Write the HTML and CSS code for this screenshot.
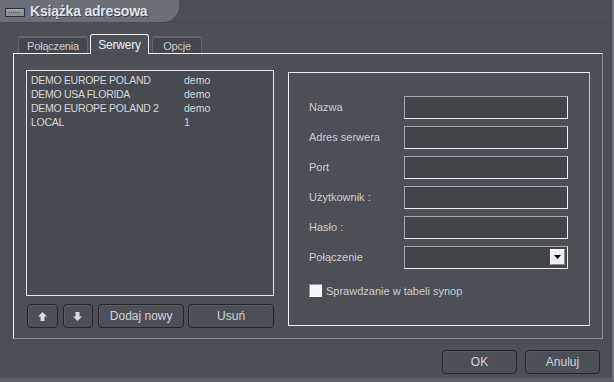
FILE: index.html
```html
<!DOCTYPE html>
<html lang="pl">
<head>
  <meta charset="UTF-8" />
  <title>Książka adresowa</title>
  <link rel="stylesheet" href="styles.css">
</head>
<body>
  <div class="window">
    <div class="titlebar">
      <div class="title-tab">
        <svg class="app-icon" width="20" height="9" viewBox="0 0 20 9">
          <rect x="0.5" y="0.5" width="19" height="8" fill="#8c9096" stroke="#2e3135"/>
          <rect x="1.5" y="1.5" width="17" height="1" fill="#b4b7bb"/>
          <line x1="4" y1="4.5" x2="16" y2="4.5" stroke="#55595f" stroke-dasharray="1 1"/>
        </svg>
        <span class="title">Książka adresowa</span>
      </div>
    </div>

    <div class="tabs">
      <div class="tab tab-conn">Połączenia</div>
      <div class="tab active">Serwery</div>
      <div class="tab tab-opts">Opcje</div>
    </div>

    <div class="panel">
      <div class="left-col">
        <div class="list">
          <div class="row"><span class="c1">DEMO EUROPE POLAND</span><span>demo</span></div>
          <div class="row"><span class="c1">DEMO USA FLORIDA</span><span>demo</span></div>
          <div class="row"><span class="c1">DEMO EUROPE POLAND 2</span><span>demo</span></div>
          <div class="row"><span class="c1">LOCAL</span><span>1</span></div>
        </div>
        <div class="list-buttons">
          <button class="btn btn-icon">
            <svg width="9" height="9" viewBox="0 0 9 9"><path d="M4.5 0 L9 4.5 L6.5 4.5 L6.5 9 L2.5 9 L2.5 4.5 L0 4.5 Z" fill="#dcdcdc"/></svg>
          </button>
          <button class="btn btn-icon">
            <svg width="9" height="9" viewBox="0 0 9 9"><path d="M4.5 9 L9 4.5 L6.5 4.5 L6.5 0 L2.5 0 L2.5 4.5 L0 4.5 Z" fill="#dcdcdc"/></svg>
          </button>
          <button class="btn btn-wide">Dodaj nowy</button>
          <button class="btn btn-wide">Usuń</button>
        </div>
      </div>

      <div class="form-box">
        <div class="field"><label>Nazwa</label><div class="input"></div></div>
        <div class="field"><label>Adres serwera</label><div class="input"></div></div>
        <div class="field"><label>Port</label><div class="input"></div></div>
        <div class="field"><label>Użytkownik :</label><div class="input"></div></div>
        <div class="field"><label>Hasło :</label><div class="input"></div></div>
        <div class="field field-combo"><label>Połączenie</label>
          <div class="input combo">
            <span class="combo-btn">
              <svg width="7" height="4" viewBox="0 0 7 4"><path d="M0 0 H7 L3.5 4 Z" fill="#000"/></svg>
            </span>
          </div>
        </div>
        <div class="check-row">
          <span class="checkbox"></span>
          <span class="check-label">Sprawdzanie w tabeli synop</span>
        </div>
      </div>
    </div>

    <div class="footer">
      <button class="btn btn-dialog">OK</button>
      <button class="btn btn-dialog">Anuluj</button>
    </div>
  </div>
</body>
</html>
```

FILE: styles.css
```css
body {
  margin: 0;
  background: #4b4f57;
  font-family: "Liberation Sans", "DejaVu Sans", sans-serif;
  font-size: 11px;
  color: #d2d4d6;
}
.window {
  width: 614px;
  height: 382px;
  box-sizing: border-box;
  background: #4b4f57;
  border-right: 2px solid #72767c;
  border-bottom: 4px solid #5c6067;
  overflow: hidden;
}
.titlebar {
  height: 22px;
  display: flex;
  border-bottom: 1px solid #44484f;
}
.title-tab {
  width: 179px;
  background: #6b7078;
  border-bottom-right-radius: 16px;
  display: flex;
  align-items: center;
  padding-left: 5px;
  gap: 5px;
  box-sizing: border-box;
}
.app-icon {
  margin-top: 3px;
}
.title {
  font-size: 14px;
  font-weight: bold;
  color: #dfe4ec;
  text-shadow: 1px 1px 0 #3c4046;
  letter-spacing: -0.2px;
}
.tabs {
  display: flex;
  align-items: flex-end;
  margin: 10px 0 0 18px;
  height: 20px;
  gap: 2px;
}
.tab {
  height: 17px;
  box-sizing: border-box;
  padding-top: 2px;
  text-align: center;
  background: #43474d;
  border: 1px solid #5f636a;
  border-top: 2px solid #62666d;
  border-bottom: none;
  border-radius: 3px 3px 0 0;
  color: #c8cacc;
  font-size: 11px;
  letter-spacing: -0.2px;
}
.tab-conn {
  width: 70px;
}
.tab-opts {
  width: 50px;
  margin-left: 1px;
}
.tab.active {
  width: 59px;
  height: 20px;
  padding-top: 3px;
  background: #4b4f57;
  border: 1px solid #f2f2f2;
  border-bottom: none;
  color: #eceef0;
  font-size: 12px;
  margin-bottom: -1px;
  position: relative;
}
.panel {
  margin-left: 13px;
  width: 590px;
  height: 286px;
  box-sizing: border-box;
  border-top: 1px solid #f2f2f2;
  border-left: 1px solid #f2f2f2;
  border-right: 1px solid #8c9096;
  border-bottom: 1px solid #8c9096;
  display: flex;
  gap: 14px;
  padding: 16px 0 0 12px;
}
.left-col {
  width: 248px;
  display: flex;
  flex-direction: column;
}
.list {
  height: 226px;
  box-sizing: border-box;
  border: 1px solid #e8e8e8;
  background: #474b51;
  padding: 2px 0 0 4px;
}
.row {
  display: flex;
  height: 14px;
  line-height: 14px;
  color: #d6d8da;
  font-size: 10.5px;
}
.c1 {
  width: 153px;
  letter-spacing: -0.3px;
}
.list-buttons {
  display: flex;
  gap: 4px;
  margin-top: 8px;
  margin-left: 1px;
}
.btn {
  height: 24px;
  box-sizing: border-box;
  background: #4b4f57;
  border: 1px solid #23252a;
  border-radius: 4px;
  color: #d2d4d6;
  font-family: "Liberation Sans", "DejaVu Sans", sans-serif;
  font-size: 12px;
  padding: 0;
  display: flex;
  align-items: center;
  justify-content: center;
  box-shadow: inset 1px 1px 0 #575b63;
}
.btn-icon {
  width: 31px;
  margin-right: 1px;
}
.btn-wide {
  width: 87px;
}
.form-box {
  width: 302px;
  height: 254px;
  margin-top: 2px;
  box-sizing: border-box;
  border: 1px solid #f2f2f2;
  border-right-color: #c8c8c8;
  padding: 23px 0 0 20px;
}
.field {
  display: flex;
  align-items: center;
  height: 22px;
  margin-bottom: 8px;
}
.field label {
  width: 95px;
  color: #ccced0;
  font-size: 11px;
}
.field:nth-child(4) {
  margin-top: 1px;
}
.field:nth-child(5) {
  margin-top: 1px;
}
.field-combo {
  margin-top: 4px;
}
.input {
  width: 164px;
  height: 23px;
  box-sizing: border-box;
  background: #414549;
  border: 1px solid #f0f0f0;
  border-top-color: #a6a8ab;
  border-left-color: #a6a8ab;
}
.combo {
  display: flex;
  justify-content: flex-end;
  align-items: center;
  padding-right: 2px;
}
.combo-btn {
  width: 15px;
  height: 16px;
  box-sizing: border-box;
  background: #f0f0f0;
  border: 1px solid #8a8a8a;
  border-top-color: #ffffff;
  border-left-color: #ffffff;
  display: flex;
  align-items: center;
  justify-content: center;
}
.check-row {
  display: flex;
  align-items: center;
  gap: 4px;
  margin-top: 16px;
}
.checkbox {
  width: 13px;
  height: 13px;
  box-sizing: border-box;
  background: #f6f6f6;
  border: 1px solid #9a9a9a;
  border-right-color: #ffffff;
  border-bottom-color: #ffffff;
}
.check-label {
  white-space: nowrap;
  color: #ccced0;
}
.footer {
  display: flex;
  justify-content: flex-end;
  gap: 8px;
  margin-top: 11px;
  padding-right: 12px;
}
.btn-dialog {
  width: 75px;
}
```
